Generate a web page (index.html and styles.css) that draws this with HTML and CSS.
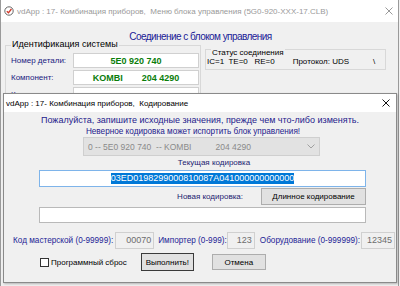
FILE: index.html
```html
<!DOCTYPE html>
<html lang="ru">
    <head>
        <meta charset="utf-8">
        <meta name="viewport" content="width=device-width, initial-scale=1.0">
        <title>vdApp - Кодирование</title>
        <link rel="stylesheet" href="styles.css">
    </head>
    <body>
        <!-- главное окно -->
        <div class="win">
            <div class="tbar">
                <svg class="ico" width="10" height="10" viewBox="0 0 10 10">
                    <circle cx="5" cy="5" r="4.2" fill="#fff" stroke="#666" stroke-width="1"/>
                    <path d="M2.8 5.2 L4.5 6.8 L7.4 3" fill="none" stroke="#d23a2a" stroke-width="1.4"/>
                </svg>
                <span>vdApp : 17- Комбинация приборов,&nbsp; Меню блока управления (5G0-920-XXX-17.CLB)</span>
                <svg class="x" width="8" height="8" viewBox="0 0 8 8">
                    <path d="M0.5 0.5 L7.5 7.5 M7.5 0.5 L0.5 7.5" stroke="#999" stroke-width="1"/>
                </svg>
            </div>
            <div class="head">Соединение с блоком управления</div>
            <div class="groups">
                <fieldset class="grp sys">
                    <legend>Идентификация системы</legend>
                    <div class="row">
                        <span class="lbl">Номер детали:</span>
                        <div class="val">5E0 920 740</div>
                    </div>
                    <div class="row">
                        <span class="lbl">Компонент:</span>
                        <div class="val two"><span>KOMBI</span><span>204 4290</span></div>
                    </div>
                    <div class="row">
                        <span class="lbl">Кодировка:</span>
                        <div class="val">длинная кодировка</div>
                    </div>
                </fieldset>
                <fieldset class="grp stat">
                    <legend>Статус соединения</legend>
                    <div class="statrow">
                        <span class="s1">IC=1&nbsp; TE=0&nbsp;&nbsp; RE=0</span>
                        <span class="s2">Протокол: UDS</span>
                        <span class="s3">\</span>
                    </div>
                </fieldset>
            </div>
        </div>

        <!-- окно кодирования -->
        <div class="dlg">
            <div class="dtbar">
                <span>vdApp : 17- Комбинация приборов,&nbsp; Кодирование</span>
                <svg class="x" width="8" height="8" viewBox="0 0 8 8">
                    <path d="M0.5 0.5 L7.5 7.5 M7.5 0.5 L0.5 7.5" stroke="#111" stroke-width="1"/>
                </svg>
            </div>
            <div class="dbody">
                <p class="warn">Пожалуйста, запишите исходные значения, прежде чем что-либо изменять.</p>
                <p class="warn w2">Неверное кодировка может испортить блок управления!</p>
                <div class="combo">
                    <span class="c1">0 -- 5E0 920 740&nbsp; -- KOMBI</span>
                    <span class="c2">204 4290</span>
                    <svg class="arr" width="8" height="5" viewBox="0 0 8 5">
                        <path d="M0.5 0.5 L4 4 L7.5 0.5" fill="none" stroke="#a0a0a0" stroke-width="1"/>
                    </svg>
                </div>
                <p class="cap mid">Текущая кодировка</p>
                <div class="field cur"><span class="sel">03ED0198299000810087A041000000000000</span></div>
                <div class="newrow">
                    <span class="cap">Новая кодировка:</span>
                    <button class="btn long">Длинное кодирование</button>
                </div>
                <div class="field"></div>
                <div class="nums">
                    <span class="nl">Код мастерской (0-99999):</span>
                    <div class="num n1">00070</div>
                    <span class="nl l2">Импортер (0-999):</span>
                    <div class="num n2">123</div>
                    <span class="nl l3">Оборудование (0-999999):</span>
                    <div class="num n3">12345</div>
                </div>
                <div class="acts">
                    <label class="chk"><span class="box"></span>Программный сброс</label>
                    <button class="btn def">Выполнить!</button>
                    <button class="btn cancel">Отмена</button>
                </div>
            </div>
        </div>
    </body>
</html>
```

FILE: styles.css
```css
body {
    margin: 0;
    width: 400px;
    height: 286px;
    overflow: hidden;
    position: relative;
    background-color: #f0f0f0;
    font-family: "Liberation Sans", Arial, sans-serif;
    font-size: 9px;
}
.win {
    width: 399px;
    height: 286px;
    box-sizing: border-box;
    border-left: 1px solid #9a9a9a;
    border-right: 1px solid #9a9a9a;
    background-color: #f0f0f0;
}
.tbar {
    height: 22px;
    background-color: #fff;
    display: flex;
    align-items: center;
    padding-left: 3px;
    color: #9a9a9a;
    font-size: 8px;
    white-space: nowrap;
}
.ico {
    margin-right: 3px;
    flex-shrink: 0;
}
.x {
    margin-left: auto;
    margin-right: 5px;
    flex-shrink: 0;
}
.head {
    margin-top: 9px;
    line-height: 12px;
    text-align: center;
    font-size: 10px;
    letter-spacing: -0.55px;
    color: #1a1a96;
    padding-left: 2px;
}
.groups {
    display: flex;
    align-items: flex-start;
    margin-top: -4px;
    padding-left: 4px;
}
.grp {
    margin: 0;
    border: 1px solid #d8d8d8;
    min-width: 0;
}
.grp legend {
    padding: 0 1px;
    line-height: 10px;
    color: #000;
}
.sys {
    width: 196px;
    box-sizing: border-box;
    padding: 0 0 6px 5px;
}
.sys legend {
    padding-bottom: 2px;
    margin-left: 0;
}
.row {
    display: flex;
    align-items: center;
    margin-top: 2px;
}
.lbl {
    width: 62px;
    color: #1a1a80;
    font-size: 8px;
}
.val {
    width: 126px;
    height: 15px;
    box-sizing: border-box;
    border: 1px solid #d0d0d0;
    background-color: #fff;
    display: flex;
    align-items: center;
    justify-content: center;
    color: #0a7d0a;
    font-weight: bold;
    font-size: 9px;
}
.val.two {
    justify-content: space-evenly;
}
.stat {
    margin-left: 4px;
    margin-top: 1px;
    width: 181px;
    box-sizing: border-box;
    padding: 0 0 2px 1px;
    font-size: 8px;
}
.stat legend {
    padding-top: 8px;
    margin-left: 4px;
}
.statrow {
    display: flex;
    line-height: 10px;
    margin-top: -1px;
    white-space: nowrap;
}
.s2 {
    margin-left: 18px;
}
.s3 {
    margin-left: 24px;
}
.dlg {
    position: absolute;
    left: 3px;
    top: 93px;
    width: 394px;
    height: 190px;
    box-sizing: border-box;
    border: 1px solid #8a8a8a;
    background-color: #f0f0f0;
    box-shadow: 1px 1px 2px rgba(0, 0, 0, 0.25);
    display: flex;
    flex-direction: column;
}
.dtbar {
    height: 18px;
    background-color: #fff;
    display: flex;
    align-items: center;
    padding-left: 2px;
    color: #000;
    font-size: 8px;
    white-space: nowrap;
}
.dtbar .x {
    margin-right: 6px;
}
.dbody {
    flex: 1;
    display: flex;
    flex-direction: column;
    padding-top: 3px;
}
.warn {
    margin: 0;
    line-height: 11px;
    text-align: center;
    color: #24208c;
}
.warn.w2 {
    font-size: 8.2px;
    padding-right: 14px;
}
.combo {
    margin-left: 79px;
    width: 237px;
    height: 19px;
    box-sizing: border-box;
    border: 1px solid #cfcfcf;
    background-color: #e2e2e2;
    display: flex;
    align-items: center;
    padding-left: 4px;
    color: #8a8a8a;
    font-size: 8.5px;
    white-space: nowrap;
}
.c2 {
    margin-left: 24px;
}
.arr {
    margin-left: auto;
    margin-right: 4px;
}
.cap {
    margin: 0;
    color: #1c1c70;
    line-height: 11px;
    font-size: 8px;
}
.cap.mid {
    margin-top: 1px;
    text-align: center;
    padding-left: 28px;
}
.field {
    margin-left: 35px;
    width: 327px;
    height: 16px;
    box-sizing: border-box;
    border: 1px solid #b9b9b9;
    background-color: #fff;
    margin-top: 2px;
}
.field.cur {
    height: 17px;
    border-color: #7eb4ea;
    display: flex;
    align-items: center;
    justify-content: center;
}
.sel {
    background-color: #0078d7;
    color: #fff;
    line-height: 11px;
}
.newrow {
    margin-left: 35px;
    width: 327px;
    margin-top: 1px;
    display: flex;
    align-items: center;
    justify-content: flex-end;
}
.newrow .cap {
    margin-right: 18px;
}
.btn {
    font-family: inherit;
    font-size: 8px;
    color: #000;
    background-color: #e1e1e1;
    border: 1px solid #adadad;
    padding: 0;
    margin: 0;
}
.long {
    width: 105px;
    height: 17px;
}
.nums {
    margin-top: 9px;
    padding-left: 9px;
    display: flex;
    align-items: center;
    height: 17px;
    white-space: nowrap;
}
.nl {
    color: #1e2496;
    font-size: 8.2px;
}
.num {
    height: 17px;
    box-sizing: border-box;
    border: 1px solid #d0d0d0;
    color: #6d6d6d;
    text-align: right;
    padding-right: 2px;
    line-height: 15px;
    flex-shrink: 0;
}
.n1 {
    width: 39px;
    margin-left: 2px;
}
.n2 {
    width: 28px;
    margin-left: 0;
}
.n3 {
    width: 34px;
    margin-left: 1px;
}
.l2 {
    margin-left: 4px;
}
.l3 {
    margin-left: 5px;
}
.acts {
    margin-top: 4px;
    display: flex;
    align-items: center;
    height: 18px;
}
.chk {
    margin-left: 36px;
    display: flex;
    align-items: center;
    color: #000;
    font-size: 8px;
}
.box {
    width: 9px;
    height: 9px;
    box-sizing: border-box;
    border: 1px solid #333;
    background-color: #fff;
    margin-right: 2px;
}
.def {
    margin-left: 14px;
    width: 53px;
    height: 18px;
    border-color: #3a3a3a;
}
.cancel {
    margin-left: 18px;
    width: 54px;
    height: 16px;
}
```
